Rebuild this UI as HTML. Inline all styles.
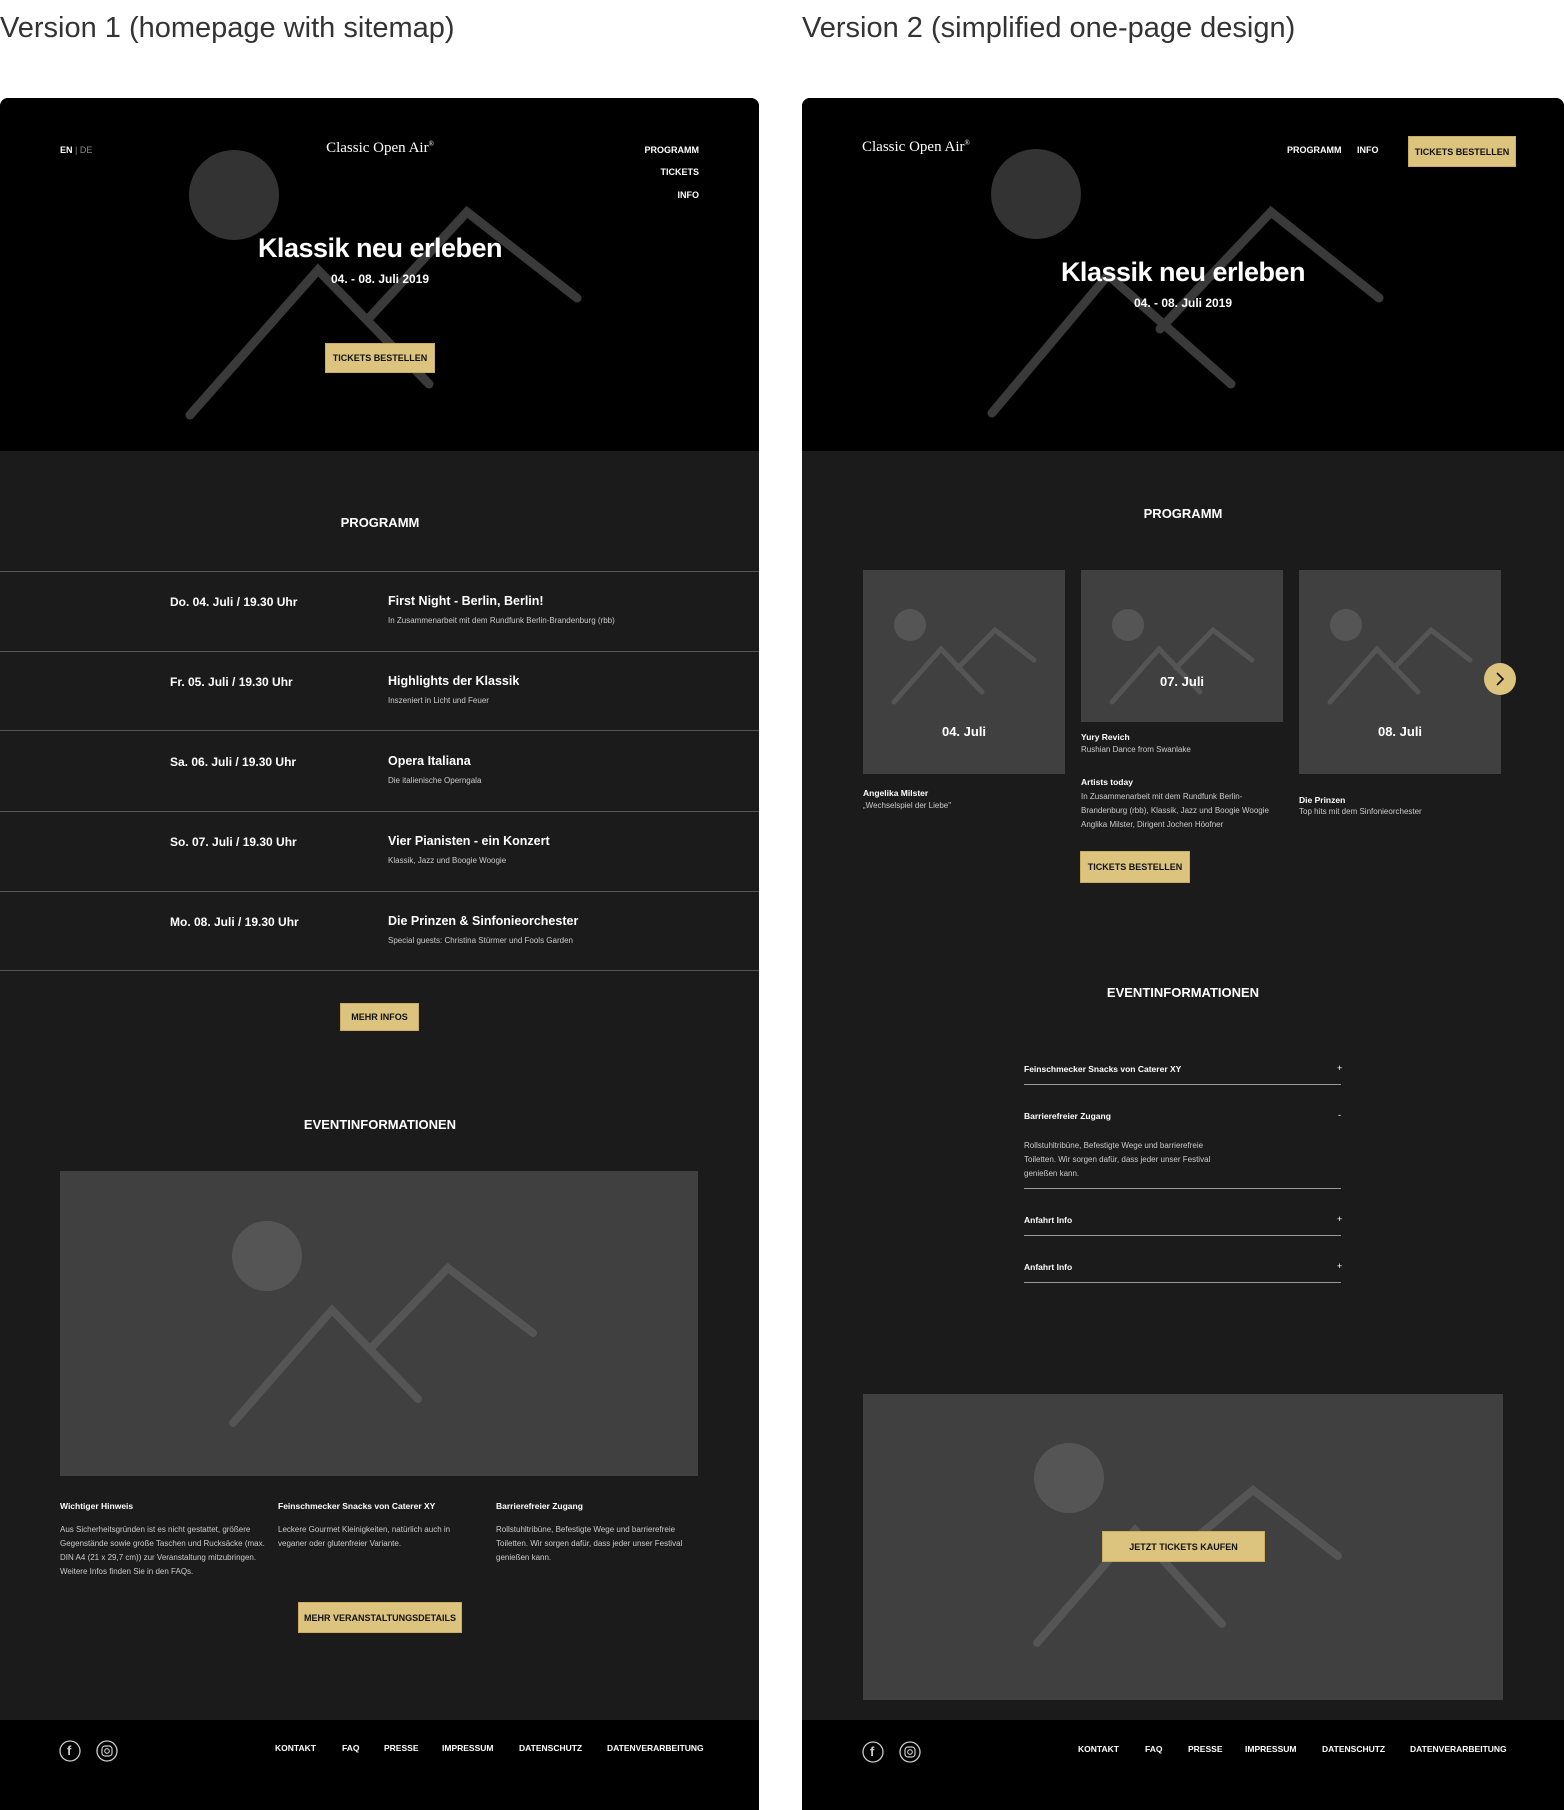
<!DOCTYPE html>
<html><head><meta charset="utf-8">
<style>
*{margin:0;padding:0;box-sizing:border-box}
body{width:1564px;height:1810px;background:#fff;position:relative;overflow:hidden;font-family:"Liberation Sans",sans-serif;color:#fff}
.a{position:absolute;white-space:nowrap}
.c{transform:translateX(-50%)}
.r{transform:translateX(-100%)}
.panel{position:absolute;top:98px;height:1712px;background:#1b1b1b;border-radius:8px 8px 0 0;overflow:hidden}
.hero{position:absolute;left:0;top:0;width:100%;height:353px;background:#000}
.foot{position:absolute;left:0;top:1622px;width:100%;height:90px;background:#000}
.b{font-weight:700}
.btn{position:absolute;background:#dcc47e;color:#111;font-weight:700;font-size:9px;display:flex;align-items:center;justify-content:center;border:1px solid #c9ae62}
.line{position:absolute;height:1px;background:#555}
.s{font-size:8px;color:#ccc}
.t{font-size:9px}
svg{position:absolute;left:0;top:0}
</style></head><body>
<div class="a" style="left:0;top:12px;font-size:29px;color:#333">Version 1 (homepage with sitemap)</div>
<div class="a" style="left:802px;top:12px;font-size:29px;color:#333">Version 2 (simplified one-page design)</div>

<!-- LEFT PANEL -->
<div class="panel" style="left:0;width:759px">
 <div class="hero"></div>
 <div class="foot"></div>
 <svg width="759" height="1712">
  <circle cx="234" cy="97" r="45" fill="#333"/>
  <g stroke="#3a3a3a" stroke-width="9" stroke-linecap="round" fill="none">
   <polyline points="190,317 318,172 429,286"/><polyline points="369,220 467,114 577,200"/>
  </g>
  <rect x="60" y="1073" width="638" height="305" fill="#404040"/>
  <circle cx="267" cy="1158" r="35" fill="#555"/>
  <g stroke="#555" stroke-width="8" stroke-linecap="round" fill="none">
   <polyline points="233,1325 332,1212 418,1301"/><polyline points="372,1249 448,1170 533,1235"/>
  </g>
  <circle cx="70" cy="1653" r="10" stroke="#ccc" stroke-width="1.3" fill="none"/>
  <circle cx="107" cy="1653" r="10" stroke="#ccc" stroke-width="1.3" fill="none"/>
  <rect x="102" y="1648" width="10" height="10" rx="3" stroke="#ccc" stroke-width="1.2" fill="none"/>
  <circle cx="107" cy="1653" r="2.3" stroke="#ccc" stroke-width="1.1" fill="none"/>
 </svg>
 <div class="a" style="left:67px;top:1645px;font-size:13px;color:#ccc;font-weight:700">f</div>
 <div class="a b" style="left:60px;top:47px;font-size:9px">EN <span style="color:#888;font-weight:400">| DE</span></div>
 <div class="a c" style="left:380px;top:42px;font-size:15px;font-family:'Liberation Serif',serif">Classic Open Air<sup style="font-size:7px">®</sup></div>
 <div class="a r b" style="left:699px;top:47px;font-size:9px">PROGRAMM</div>
 <div class="a r b" style="left:699px;top:69px;font-size:9px">TICKETS</div>
 <div class="a r b" style="left:699px;top:92px;font-size:9px">INFO</div>
 <div class="a c b" style="left:380px;top:135px;font-size:27px;letter-spacing:-0.5px">Klassik neu erleben</div>
 <div class="a c b" style="left:380px;top:174px;font-size:12px">04. - 08. Juli 2019</div>
 <div class="btn" style="left:325px;top:245px;width:110px;height:30px">TICKETS BESTELLEN</div>
 <div class="a c b" style="left:380px;top:417px;font-size:13px">PROGRAMM</div>
 <div class="line" style="left:0;width:759px;top:473px"></div>
 <div class="line" style="left:0;width:759px;top:553px"></div>
 <div class="line" style="left:0;width:759px;top:632px"></div>
 <div class="line" style="left:0;width:759px;top:713px"></div>
 <div class="line" style="left:0;width:759px;top:793px"></div>
 <div class="line" style="left:0;width:759px;top:872px"></div>
 <div class="a b" style="left:170px;top:497px;font-size:12px">Do. 04. Juli / 19.30 Uhr</div>
 <div class="a b" style="left:388px;top:496px;font-size:12.5px">First Night - Berlin, Berlin!</div>
 <div class="a s" style="left:388px;top:518px">In Zusammenarbeit mit dem Rundfunk Berlin-Brandenburg (rbb)</div>
 <div class="a b" style="left:170px;top:577px;font-size:12px">Fr. 05. Juli / 19.30 Uhr</div>
 <div class="a b" style="left:388px;top:576px;font-size:12.5px">Highlights der Klassik</div>
 <div class="a s" style="left:388px;top:598px">Inszeniert in Licht und Feuer</div>
 <div class="a b" style="left:170px;top:657px;font-size:12px">Sa. 06. Juli / 19.30 Uhr</div>
 <div class="a b" style="left:388px;top:656px;font-size:12.5px">Opera Italiana</div>
 <div class="a s" style="left:388px;top:678px">Die italienische Operngala</div>
 <div class="a b" style="left:170px;top:737px;font-size:12px">So. 07. Juli / 19.30 Uhr</div>
 <div class="a b" style="left:388px;top:736px;font-size:12.5px">Vier Pianisten - ein Konzert</div>
 <div class="a s" style="left:388px;top:758px">Klassik, Jazz und Boogie Woogie</div>
 <div class="a b" style="left:170px;top:817px;font-size:12px">Mo. 08. Juli / 19.30 Uhr</div>
 <div class="a b" style="left:388px;top:816px;font-size:12.5px">Die Prinzen &amp; Sinfonieorchester</div>
 <div class="a s" style="left:388px;top:838px">Special guests: Christina Stürmer und Fools Garden</div>
 <div class="btn" style="left:340px;top:905px;width:79px;height:28px">MEHR INFOS</div>
 <div class="a c b" style="left:380px;top:1019px;font-size:13px">EVENTINFORMATIONEN</div>
 <div class="a b t" style="left:60px;top:1403px;font-size:8.5px">Wichtiger Hinweis</div>
 <div class="a s" style="left:60px;top:1425px;line-height:14px;white-space:normal;width:205px">Aus Sicherheitsgründen ist es nicht gestattet, größere Gegenstände sowie große Taschen und Rucksäcke (max. DIN A4 (21 x 29,7 cm)) zur Veranstaltung mitzubringen. Weitere Infos finden Sie in den FAQs.</div>
 <div class="a b t" style="left:278px;top:1403px;font-size:8.5px">Feinschmecker Snacks von Caterer XY</div>
 <div class="a s" style="left:278px;top:1425px;line-height:14px;white-space:normal;width:200px">Leckere Gourmet Kleinigkeiten, natürlich auch in veganer oder glutenfreier Variante.</div>
 <div class="a b t" style="left:496px;top:1403px;font-size:8.5px">Barrierefreier Zugang</div>
 <div class="a s" style="left:496px;top:1425px;line-height:14px;white-space:normal;width:205px">Rollstuhltribüne, Befestigte Wege und barrierefreie Toiletten. Wir sorgen dafür, dass jeder unser Festival genießen kann.</div>
 <div class="btn" style="left:298px;top:1504px;width:164px;height:31px">MEHR VERANSTALTUNGSDETAILS</div>
 <div class="a b" style="left:275px;top:1645px;font-size:8.5px">KONTAKT</div>
 <div class="a b" style="left:342px;top:1645px;font-size:8.5px">FAQ</div>
 <div class="a b" style="left:384px;top:1645px;font-size:8.5px">PRESSE</div>
 <div class="a b" style="left:442px;top:1645px;font-size:8.5px">IMPRESSUM</div>
 <div class="a b" style="left:519px;top:1645px;font-size:8.5px">DATENSCHUTZ</div>
 <div class="a b" style="left:607px;top:1645px;font-size:8.5px">DATENVERARBEITUNG</div>
</div>

<!-- RIGHT PANEL -->
<div class="panel" style="left:802px;width:762px">
 <div class="hero"></div>
 <div class="foot"></div>
 <svg width="762" height="1712">
  <circle cx="234" cy="96" r="45" fill="#333"/>
  <g stroke="#3a3a3a" stroke-width="9" stroke-linecap="round" fill="none">
   <polyline points="190,315 306,177 429,286"/><polyline points="358,231 469,114 577,200"/>
  </g>
  <rect x="61" y="472" width="202" height="204" fill="#404040"/>
  <circle cx="108" cy="527" r="16" fill="#555"/>
  <g stroke="#555" stroke-width="5" stroke-linecap="round" fill="none">
   <polyline points="92,604 139,551 180,594"/><polyline points="156,570 193,532 232,562"/>
  </g>
  <rect x="279" y="472" width="202" height="152" fill="#404040"/>
  <circle cx="326" cy="527" r="16" fill="#555"/>
  <g stroke="#555" stroke-width="5" stroke-linecap="round" fill="none">
   <polyline points="310,604 357,551 398,594"/><polyline points="374,570 411,532 450,562"/>
  </g>
  <rect x="497" y="472" width="202" height="204" fill="#404040"/>
  <circle cx="544" cy="527" r="16" fill="#555"/>
  <g stroke="#555" stroke-width="5" stroke-linecap="round" fill="none">
   <polyline points="528,604 575,551 616,594"/><polyline points="592,570 629,532 668,562"/>
  </g>
  <circle cx="698" cy="581" r="16" fill="#dcc47e"/>
  <polyline points="695,575 701,581 695,587" stroke="#111" stroke-width="1.6" fill="none"/>
  <rect x="61" y="1296" width="640" height="306" fill="#404040"/>
  <circle cx="267" cy="1380" r="35" fill="#555"/>
  <g stroke="#555" stroke-width="8" stroke-linecap="round" fill="none">
   <polyline points="235,1545 333,1432 420,1526"/><polyline points="370,1460 451,1392 536,1458"/>
  </g>
  <circle cx="71" cy="1654" r="10" stroke="#ccc" stroke-width="1.3" fill="none"/>
  <circle cx="108" cy="1654" r="10" stroke="#ccc" stroke-width="1.3" fill="none"/>
  <rect x="103" y="1649" width="10" height="10" rx="3" stroke="#ccc" stroke-width="1.2" fill="none"/>
  <circle cx="108" cy="1654" r="2.3" stroke="#ccc" stroke-width="1.1" fill="none"/>
 </svg>
 <div class="a" style="left:68px;top:1646px;font-size:13px;color:#ccc;font-weight:700">f</div>
 <div class="a" style="left:60px;top:41px;font-size:15px;font-family:'Liberation Serif',serif">Classic Open Air<sup style="font-size:7px">®</sup></div>
 <div class="a b" style="left:485px;top:47px;font-size:9px">PROGRAMM</div>
 <div class="a b" style="left:555px;top:47px;font-size:9px">INFO</div>
 <div class="btn" style="left:606px;top:38px;width:108px;height:31px">TICKETS BESTELLEN</div>
 <div class="a c b" style="left:381px;top:159px;font-size:27px;letter-spacing:-0.5px">Klassik neu erleben</div>
 <div class="a c b" style="left:381px;top:198px;font-size:12px">04. - 08. Juli 2019</div>
 <div class="a c b" style="left:381px;top:408px;font-size:13px">PROGRAMM</div>
 <div class="a c b" style="left:162px;top:626px;font-size:13px">04. Juli</div>
 <div class="a c b" style="left:380px;top:576px;font-size:13px">07. Juli</div>
 <div class="a c b" style="left:598px;top:626px;font-size:13px">08. Juli</div>
 <div class="a b" style="left:61px;top:690px;font-size:8.5px">Angelika Milster</div>
 <div class="a s" style="left:61px;top:703px">„Wechselspiel der Liebe"</div>
 <div class="a b" style="left:279px;top:634px;font-size:8.5px">Yury Revich</div>
 <div class="a s" style="left:279px;top:647px">Rushian Dance from Swanlake</div>
 <div class="a b" style="left:279px;top:679px;font-size:8.5px">Artists today</div>
 <div class="a s" style="left:279px;top:692px;line-height:14px">In Zusammenarbeit mit dem Rundfunk Berlin-<br>Brandenburg (rbb), Klassik, Jazz und Boogie Woogie<br>Anglika Milster, Dirigent Jochen Höofner</div>
 <div class="a b" style="left:497px;top:697px;font-size:8.5px">Die Prinzen</div>
 <div class="a s" style="left:497px;top:709px">Top hits mit dem Sinfonieorchester</div>
 <div class="btn" style="left:278px;top:753px;width:110px;height:32px">TICKETS BESTELLEN</div>
 <div class="a c b" style="left:381px;top:887px;font-size:13px">EVENTINFORMATIONEN</div>
 <div class="a b" style="left:222px;top:966px;font-size:8.5px">Feinschmecker Snacks von Caterer XY</div>
 <div class="a" style="left:535px;top:965px;font-size:9px">+</div>
 <div class="line" style="left:222px;width:317px;top:986px;background:#999"></div>
 <div class="a b" style="left:222px;top:1013px;font-size:8.5px">Barrierefreier Zugang</div>
 <div class="a" style="left:536px;top:1012px;font-size:9px">-</div>
 <div class="a s" style="left:222px;top:1041px;line-height:14px">Rollstuhltribüne, Befestigte Wege und barrierefreie<br>Toiletten. Wir sorgen dafür, dass jeder unser Festival<br>genießen kann.</div>
 <div class="line" style="left:222px;width:317px;top:1090px;background:#999"></div>
 <div class="a b" style="left:222px;top:1117px;font-size:8.5px">Anfahrt Info</div>
 <div class="a" style="left:535px;top:1116px;font-size:9px">+</div>
 <div class="line" style="left:222px;width:317px;top:1137px;background:#999"></div>
 <div class="a b" style="left:222px;top:1164px;font-size:8.5px">Anfahrt Info</div>
 <div class="a" style="left:535px;top:1163px;font-size:9px">+</div>
 <div class="line" style="left:222px;width:317px;top:1184px;background:#999"></div>
 <div class="btn" style="left:300px;top:1433px;width:163px;height:31px">JETZT TICKETS KAUFEN</div>
 <div class="a b" style="left:276px;top:1646px;font-size:8.5px">KONTAKT</div>
 <div class="a b" style="left:343px;top:1646px;font-size:8.5px">FAQ</div>
 <div class="a b" style="left:386px;top:1646px;font-size:8.5px">PRESSE</div>
 <div class="a b" style="left:443px;top:1646px;font-size:8.5px">IMPRESSUM</div>
 <div class="a b" style="left:520px;top:1646px;font-size:8.5px">DATENSCHUTZ</div>
 <div class="a b" style="left:608px;top:1646px;font-size:8.5px">DATENVERARBEITUNG</div>
</div>
</body></html>
